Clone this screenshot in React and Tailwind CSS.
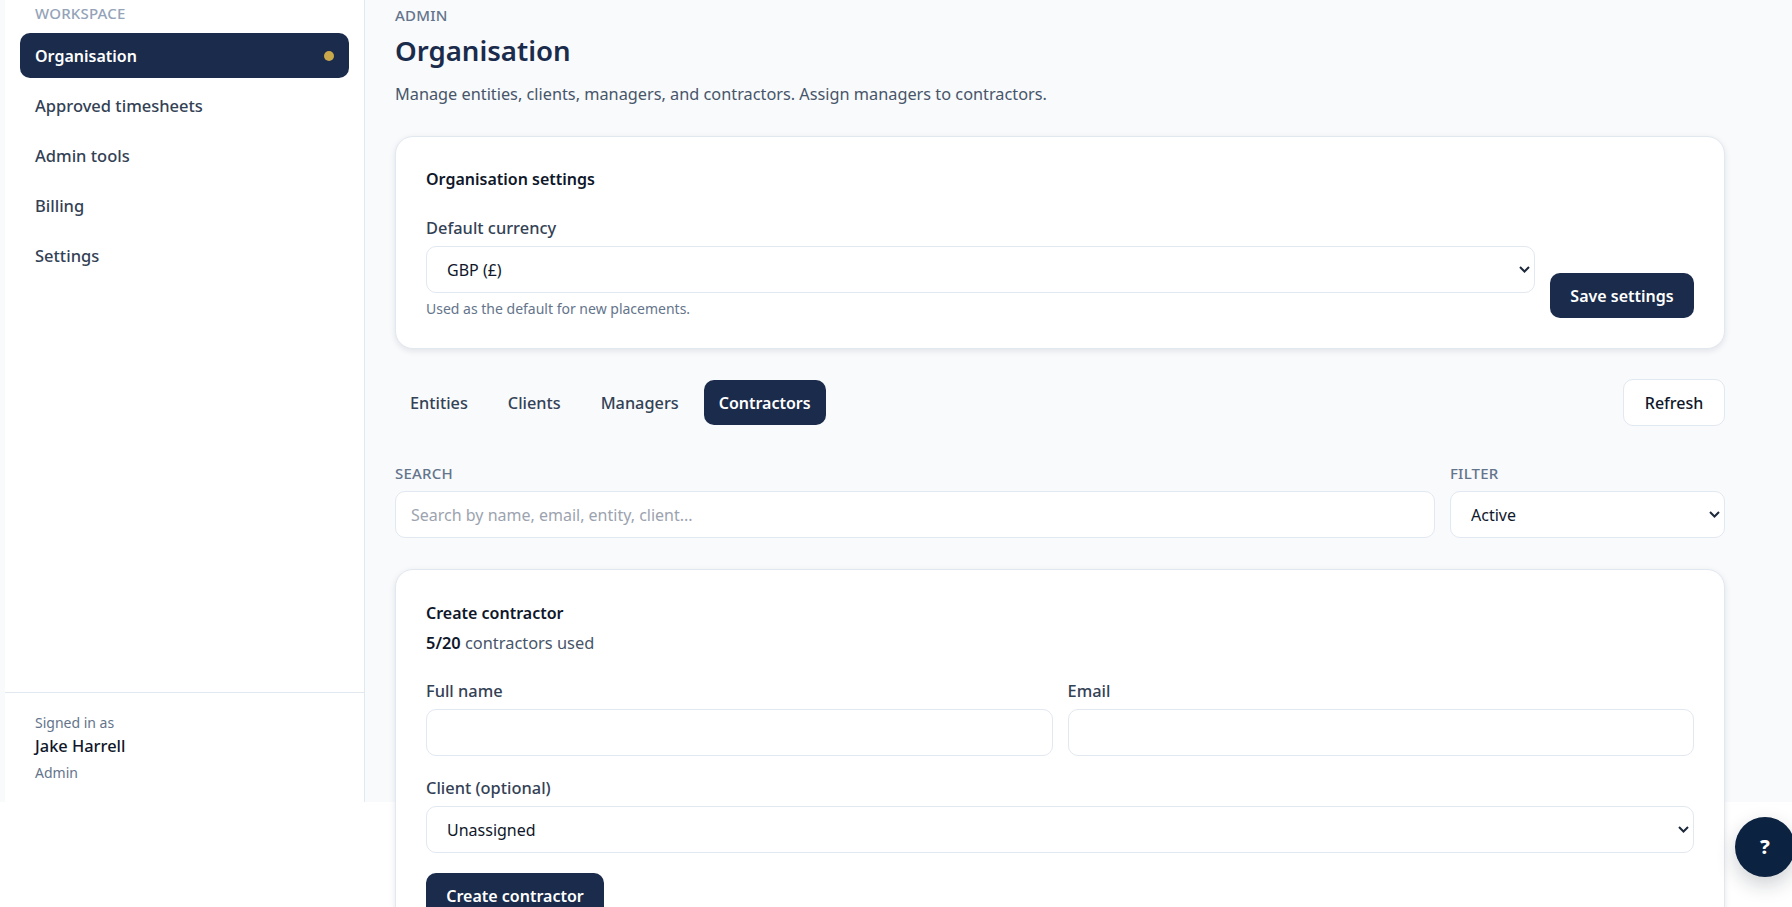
const navItems = ["Approved timesheets", "Admin tools", "Billing", "Settings"];
const tabs = ["Entities", "Clients", "Managers"];

const fieldClass =
  "h-[47px] w-full rounded-[10px] border border-[#e2e8f0] bg-white text-[16px] text-[#0f172a] outline-none";
const labelClass = "block text-[16.4px] leading-[22px] font-medium text-[#334155]";
const eyebrowClass = "block text-[15px] leading-[20px] font-medium tracking-[0.2px] text-[#64748b]";
const cardClass = "rounded-[18px] border border-[#e2e8f0] bg-white px-[30px] shadow-[0_2px_6px_rgba(15,23,42,0.1)]";
const navyButton = "rounded-[10px] bg-[#1b2b4b] text-[16px] font-semibold text-white";

const Select = ({ value, className = "" }) => (
  <div className={`relative ${className}`}>
    <select className={`${fieldClass} appearance-none pl-[20px]`} defaultValue={value}>
      <option>{value}</option>
    </select>
    <svg
      className="pointer-events-none absolute top-[20px] right-[5px]"
      width="11"
      height="7"
      viewBox="0 0 11 7"
      fill="none"
      stroke="#1e293b"
      strokeWidth="2"
    >
      <path d="M1 1l4.5 4.5L10 1" />
    </svg>
  </div>
);

const App = () => {
  return (
    <div className="relative h-screen overflow-hidden bg-white font-['Noto_Sans',sans-serif]">
      <div className="flex h-[802px] bg-[#f8fafc] pl-[5px]">
        {/* Sidebar */}
        <aside className="flex w-[360px] shrink-0 flex-col border-r border-[#e2e8f0] bg-white">
          <div className="flex-1 px-[15px] pt-[4px]">
            <div className="pl-[15px] text-[15px] leading-[18px] font-medium tracking-[0.2px] text-[#94a3b8]">WORKSPACE</div>
            <nav className="mt-[11px] flex flex-col gap-[5px]">
              <a className="flex h-[45px] items-center justify-between rounded-[10px] bg-[#1b2b4b] px-[15px] text-[16px] font-semibold text-white">
                Organisation
                <span className="size-[10px] rounded-full bg-[#c9a84c]" />
              </a>
              {navItems.map((item) => (
                <a key={item} className="flex h-[45px] items-center px-[15px] pt-[2px] text-[16.5px] font-medium text-[#334155]">
                  {item}
                </a>
              ))}
            </nav>
          </div>
          <div className="h-[110px] border-t border-[#e2e8f0] px-[30px] pt-[20px]">
            <div className="text-[14px] leading-[20px] text-[#64748b]">Signed in as</div>
            <div className="mt-[2px] text-[16.4px] leading-[22px] font-medium text-[#0f172a]">Jake Harrell</div>
            <div className="mt-[6px] text-[14px] leading-[20px] text-[#64748b]">Admin</div>
          </div>
        </aside>

        {/* Main */}
        <main className="min-w-0 flex-1 pt-[5px] pr-[67px] pl-[30px]">
          <div className={eyebrowClass}>ADMIN</div>
          <h1 className="mt-[5px] text-[27.6px] leading-[40px] font-semibold text-[#1b2b4b]">Organisation</h1>
          <p className="mt-[12px] text-[16.3px] leading-[24px] text-[#475569]">
            Manage entities, clients, managers, and contractors. Assign managers to contractors.
          </p>

          <section className={`${cardClass} mt-[30px] h-[213px] pt-[30px]`}>
            <h2 className="text-[16px] leading-[24px] font-semibold text-[#0f172a]">Organisation settings</h2>
            <div className="mt-[26px] flex items-end gap-[15px]">
              <div className="flex-1">
                <label className={labelClass}>Default currency</label>
                <Select value="GBP (£)" className="mt-[7px]" />
                <div className="mt-[6px] text-[14px] leading-[20px] text-[#64748b]">Used as the default for new placements.</div>
              </div>
              <button className={`${navyButton} mb-[1px] h-[45px] w-[144px]`}>Save settings</button>
            </div>
          </section>

          <div className="mt-[30px] flex items-center justify-between">
            <div className="flex items-center gap-[10px]">
              {tabs.map((tab) => (
                <button key={tab} className="h-[45px] rounded-[10px] px-[15px] pt-[2px] text-[16.3px] font-medium text-[#334155]">
                  {tab}
                </button>
              ))}
              <button className={`${navyButton} h-[45px] px-[15px]`}>Contractors</button>
            </div>
            <button className="h-[47px] w-[102px] rounded-[10px] border border-[#e2e8f0] bg-white text-[16px] font-medium text-[#0f172a]">
              Refresh
            </button>
          </div>

          <div className="mt-[37px] flex gap-[15px]">
            <div className="flex-1">
              <label className={eyebrowClass}>SEARCH</label>
              <input
                className={`${fieldClass} mt-[8px] px-[15px] text-[16.4px] placeholder:text-[#9ca3af]`}
                placeholder="Search by name, email, entity, client..."
              />
            </div>
            <div className="w-[275px]">
              <label className={eyebrowClass}>FILTER</label>
              <Select value="Active" className="mt-[8px]" />
            </div>
          </div>

          <section className={`${cardClass} mt-[31px] pt-[31px] pb-[30px]`}>
            <h2 className="text-[16px] leading-[24px] font-semibold text-[#0f172a]">Create contractor</h2>
            <p className="mt-[6px] text-[16.4px] leading-[24px] text-[#475569]">
              <span className="font-semibold text-[#0f172a]">5/20</span> contractors used
            </p>
            <div className="mt-[25px] grid grid-cols-2 gap-[15px]">
              <div>
                <label className={labelClass}>Full name</label>
                <input className={`${fieldClass} mt-[7px] px-[15px]`} />
              </div>
              <div>
                <label className={labelClass}>Email</label>
                <input className={`${fieldClass} mt-[7px] px-[15px]`} />
              </div>
            </div>
            <label className={`${labelClass} mt-[21px]`}>Client (optional)</label>
            <Select value="Unassigned" className="mt-[7px]" />
            <button className={`${navyButton} mt-[20px] h-[45px] w-[178px]`}>Create contractor</button>
          </section>
        </main>
      </div>

      {/* Help button */}
      <button className="absolute top-[817px] left-[1735px] flex size-[60px] items-center justify-center rounded-full bg-[#0b2240] text-[20px] font-extrabold text-white shadow-[0_8px_20px_rgba(15,23,42,0.2)]">
        ?
      </button>
    </div>
  );
};

export default App;
